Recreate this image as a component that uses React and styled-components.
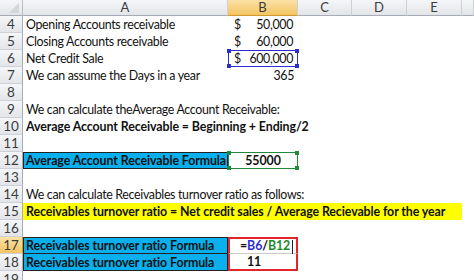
import React from "react";
import styled, { createGlobalStyle, css } from "styled-components";

const GlobalStyle = createGlobalStyle`
  html, body { margin: 0; padding: 0; background: #fff; }
  body { font-family: Lato, "Open Sans", sans-serif; }
`;

const COLUMNS = [
  { key: "A", label: "A" },
  { key: "B", label: "B", active: true },
  { key: "C", label: "C" },
  { key: "D", label: "D" },
  { key: "E", label: "E" },
  { key: "F", label: "" },
];

const ROWS = [
  { n: 4, a: "Opening Accounts receivable", b: { money: "50,000" } },
  { n: 5, a: "Closing Accounts receivable", b: { money: "60,000" } },
  { n: 6, a: "Net Credit Sale", b: { money: "600,000", mark: "ref" } },
  { n: 7, a: "We can assume the Days in a year", b: { text: "365", align: "right" } },
  { n: 8 },
  { n: 9, a: "We can calculate theAverage Account Receivable:", span: 6 },
  { n: 10, a: "Average Account Receivable = Beginning + Ending/2", bold: true, span: 6 },
  { n: 11 },
  {
    n: 12,
    a: "Average Account Receivable Formula",
    fill: "blue",
    bold: true,
    b: { text: "55000", bold: true, align: "center", mark: "copy" },
  },
  { n: 13 },
  { n: 14, a: "We can calculate Receivables turnover ratio as follows:", span: 6 },
  {
    n: 15,
    a: "Receivables turnover ratio = Net credit sales / Average Recievable for the year",
    fill: "yellow",
    bold: true,
    span: 5,
  },
  { n: 16 },
  {
    n: 17,
    a: "Receivables turnover ratio Formula",
    fill: "blue",
    bold: true,
    active: true,
    b: { formula: true, box: "top", indent: 10 },
  },
  {
    n: 18,
    a: "Receivables turnover ratio Formula",
    fill: "blue",
    bold: true,
    joined: true,
    b: { text: "11", bold: true, box: "bottom", indent: 17 },
  },
  { n: 19 },
];

const FILLS = { blue: "#0ab0ee", yellow: "#ffff00" };

const Sheet = styled.div`
  width: 474px;
  height: 280px;
  overflow: hidden;
  display: grid;
  grid-template-columns: 23px 205px 70px 54px 55px 55px 1fr;
  grid-template-rows: 16px;
  grid-auto-rows: 17px;
  color: #111;
  background: #fff;
`;

const headBg = css`
  background: linear-gradient(#f5f6f8, #e3e5e9);
`;
const activeBg = css`
  background: linear-gradient(#fbe2a6, #f3c462);
`;

const Corner = styled.div`
  ${headBg};
  position: relative;
  border-right: 1px solid #b9bec6;
  border-bottom: 1px solid #a6acb5;
  &::after {
    content: "";
    position: absolute;
    right: 3px;
    bottom: 2px;
    border-style: solid;
    border-width: 0 0 10px 10px;
    border-color: transparent transparent #d3d6db transparent;
  }
`;

const ColHead = styled.div`
  ${(p) => (p.$active ? activeBg : headBg)};
  border-right: 1px solid #cdd1d7;
  border-bottom: 1px solid ${(p) => (p.$active ? "#d29a2e" : "#a6acb5")};
  display: flex;
  align-items: center;
  justify-content: center;
  font-family: Lato, sans-serif;
  font-size: 13px;
  color: #3c3c3c;
  padding-bottom: 1px;
  box-sizing: border-box;
`;

const RowHead = styled.div`
  ${(p) => (p.$active ? activeBg : headBg)};
  border-right: 1px solid ${(p) => (p.$active ? "#d29a2e" : "#a6acb5")};
  border-bottom: 1px solid #cdd1d7;
  display: flex;
  align-items: center;
  justify-content: center;
  font-family: Lato, sans-serif;
  font-size: 13.5px;
  color: #3c3c3c;
  box-sizing: border-box;
`;

const Cell = styled.div`
  grid-column: span ${(p) => p.$span || 1};
  position: relative;
  min-width: 0;
  display: flex;
  align-items: center;
  justify-content: ${(p) =>
    p.$align === "right" ? "flex-end" : p.$align === "center" ? "center" : "flex-start"};
  padding: 0 ${(p) => (p.$align === "right" ? "4px" : "3px")} 0
    ${(p) => (p.$indent ? `${p.$indent}px` : "3px")};
  box-sizing: border-box;
  white-space: nowrap;
  font-family: Lato, sans-serif;
  font-size: 12.4px;
  letter-spacing: ${(p) => (p.$bold ? "-0.1px" : "-0.33px")};
  font-weight: ${(p) => (p.$bold ? 700 : 400)};
  background: ${(p) => (p.$fill ? FILLS[p.$fill] : "transparent")};
  ${(p) =>
    p.$fill === "blue" &&
    css`
      overflow: hidden;
      padding-left: 2px;
      border: 1px solid #222;
      border-top-width: ${p.$joined ? 0 : 1}px;
    `}
  ${(p) =>
    p.$box &&
    css`
      border: 2px solid #e3262b;
      ${p.$box === "top" ? "border-bottom: 1px solid #c9c9c9;" : "border-top: 0;"}
    `}
`;

const Money = styled.div`
  flex: 1;
  display: flex;
  justify-content: space-between;
  padding: 0 2px 0 3px;
`;

const Mark = styled.div`
  position: absolute;
  inset: 0;
  border: 1px solid ${(p) => p.$color};
  pointer-events: none;
  & > i {
    position: absolute;
    width: 4px;
    height: 4px;
    background: ${(p) => p.$color};
  }
  & > i:nth-child(1) { left: -2px; top: -2px; }
  & > i:nth-child(2) { right: -2px; top: -2px; }
  & > i:nth-child(3) { left: -2px; bottom: -2px; }
  & > i:nth-child(4) { right: -2px; bottom: -2px; }
`;

const Ref = styled.span`
  color: ${(p) => p.$color};
`;

const Caret = styled.span`
  display: inline-block;
  vertical-align: middle;
  width: 1px;
  height: 14px;
  background: #222;
  margin-left: 2px;
`;

const MARK_COLORS = { ref: "#2c2ccf", copy: "#22883a" };

function ValueCell({ b }) {
  if (!b) return <Cell />;
  return (
    <Cell
      $bold={b.bold || b.formula}
      $align={b.align}
      $box={b.box}
      $indent={b.indent}
    >
      {b.money && (
        <Money>
          <span>$</span>
          <span>{b.money}</span>
        </Money>
      )}
      {b.text}
      {b.formula && (
        <span>
          =<Ref $color="#2d2dd6">B6</Ref>/<Ref $color="#1f8a2a">B12</Ref>
          <Caret />
        </span>
      )}
      {b.mark && (
        <Mark $color={MARK_COLORS[b.mark]}>
          <i />
          <i />
          <i />
          <i />
        </Mark>
      )}
    </Cell>
  );
}

function SheetRow({ row }) {
  return (
    <>
      <RowHead $active={row.active}>{row.n}</RowHead>
      {row.span ? (
        <Cell $span={row.span} $bold={row.bold} $fill={row.fill}>
          {row.a}
        </Cell>
      ) : (
        <>
          <Cell $bold={row.bold} $fill={row.fill} $joined={row.joined}>
            {row.a}
          </Cell>
          <ValueCell b={row.b} />
        </>
      )}
      {Array.from({ length: row.span ? 6 - row.span : 4 }).map((_, i) => (
        <Cell key={i} />
      ))}
    </>
  );
}

export default function App() {
  return (
    <>
      <GlobalStyle />
      <Sheet>
        <Corner />
        {COLUMNS.map((c) => (
          <ColHead key={c.key} $active={c.active}>
            {c.label}
          </ColHead>
        ))}
        {ROWS.map((r) => (
          <SheetRow key={r.n} row={r} />
        ))}
      </Sheet>
    </>
  );
}
